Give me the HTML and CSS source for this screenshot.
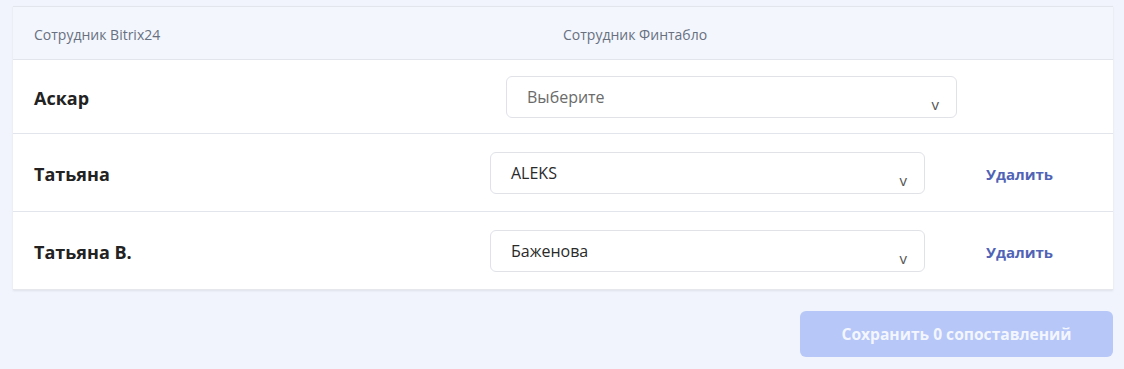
FILE: index.html
```html
<!DOCTYPE html>
<html lang="ru">
<head>
  <meta charset="UTF-8" />
  <title>Сопоставление сотрудников</title>
  <link rel="stylesheet" href="styles.css">
</head>
<body>

<div class="card">
  <div class="head">
    <div class="head-col">Сотрудник Bitrix24</div>
    <div class="head-col">Сотрудник Финтабло</div>
  </div>

  <div class="row row-new">
    <div class="name">Аскар</div>
    <div class="select placeholder">Выберите <span class="chev">v</span></div>
  </div>

  <div class="row">
    <div class="name">Татьяна</div>
    <div class="select">ALEKS <span class="chev">v</span></div>
    <a class="del">Удалить</a>
  </div>

  <div class="row">
    <div class="name">Татьяна В.</div>
    <div class="select">Баженова <span class="chev">v</span></div>
    <a class="del">Удалить</a>
  </div>
</div>

<div class="footer">
  <button class="save-btn">Сохранить 0 сопоставлений</button>
</div>

</body>
</html>
```

FILE: styles.css
```css
body {
  background: #f1f4fc;
  color: #222;
  font-family: "Open Sans", sans-serif;
  margin: 0;
  padding: 6px 11px 0 13px;
}
.card {
  background: #fff;
  border-top: 1px solid #e3e5ec;
  box-shadow: 0 1px 2px rgba(0, 0, 0, 0.08);
}
.head {
  display: grid;
  grid-template-columns: 529px 1fr;
  align-items: center;
  height: 53px;
  padding: 3px 0 0 21px;
  box-sizing: border-box;
  background: #f3f6fd;
  border-bottom: 1px solid #e3e5ec;
  font-size: 14px;
  color: #687080;
}
.row {
  display: grid;
  grid-template-columns: 456px 435px 1fr;
  align-items: center;
  height: 77px;
  padding-left: 21px;
  border-bottom: 1px solid #e3e5ec;
}
.row-new {
  grid-template-columns: 472px 451px 1fr;
  height: 73px;
}
.row:last-child { border-bottom: 1px solid #e6e7ec; }
.name {
  padding-top: 3px;
  font-size: 18px;
  font-weight: bold;
  color: #222;
}
.select {
  position: relative;
  height: 40px;
  line-height: 40px;
  padding-left: 20px;
  border: 1px solid #e0e2e7;
  border-radius: 6px;
  font-size: 16px;
  color: #2a2a2a;
}
.placeholder { color: #6b6b6b; }
.chev {
  position: absolute;
  right: 17px;
  top: 7px;
  font-size: 15px;
  color: #555;
}
.del {
  margin-left: 61px;
  padding-top: 2px;
  font-size: 15px;
  font-weight: bold;
  color: #5063b6;
  cursor: pointer;
}
.footer {
  display: flex;
  justify-content: flex-end;
  margin-top: 21px;
}
.save-btn {
  width: 313px;
  height: 46px;
  border: none;
  border-radius: 6px;
  background: #b6c7f8;
  color: #f4f6ff;
  font-family: "Open Sans", sans-serif;
  font-size: 15.6px;
  font-weight: bold;
}
```
